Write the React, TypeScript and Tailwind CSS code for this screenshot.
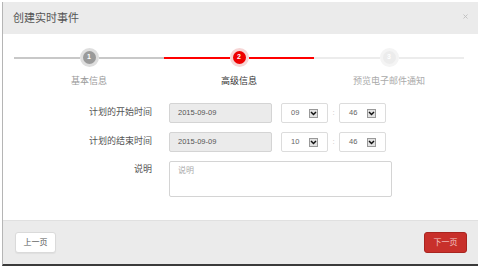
import { X } from "lucide-react";

const cjk = { fontFamily: '"Liberation Sans", "Noto Sans CJK SC", sans-serif' };

function Step({ n, label, line, circle, ring, text }: { n: number; label: string; line: string; circle: string; ring: string; text: string }) {
  return (
    <div className="flex w-[150px] flex-col items-center">
      <div className="flex w-full items-center">
        <div className={`h-[2px] flex-1 ${line}`} />
        <div className={`flex h-[19px] w-[19px] items-center justify-center rounded-full border-[3px] text-[7px] font-bold text-white ${circle} ${ring}`}>
          {n}
        </div>
        <div className={`h-[2px] flex-1 ${line}`} />
      </div>
      <div className={`mt-[8px] text-[9px] leading-[12px] ${text}`}>{label}</div>
    </div>
  );
}

function TimeSelect({ value }: { value: string }) {
  return (
    <div className="flex h-[20px] w-[47px] items-center justify-between rounded-[2px] border border-[#dcdcdc] bg-white pl-[9px] pr-[9px] text-[7.5px] text-[#666]">
      <span>{value}</span>
      <span className="flex h-[9px] w-[9px] items-center justify-center border border-[#999] bg-[#e2e2e2]">
        <svg width="7" height="5" viewBox="0 0 7 5">
          <path d="M1 1 L3.5 3.5 L6 1" fill="none" stroke="#111" strokeWidth="1.5" />
        </svg>
      </span>
    </div>
  );
}

function TimeRow({ label, date, hour, minute }: { label: string; date: string; hour: string; minute: string }) {
  return (
    <div className="flex h-[20px] items-center">
      <div className="w-[149px] text-right text-[9px] text-[#555]">{label}</div>
      <div className="ml-[17px] flex h-[20px] w-[103px] items-center rounded-[2px] border border-[#d4d4d4] bg-[#ebebeb] pl-[8px] text-[7.5px] text-[#555]">
        {date}
      </div>
      <div className="ml-[9px]">
        <TimeSelect value={hour} />
      </div>
      <div className="w-[11px] text-center text-[8px] text-[#c4c4c4]">:</div>
      <TimeSelect value={minute} />
    </div>
  );
}

export default function App() {
  return (
    <div className="h-[268px] w-[480px] bg-white pt-[2px] pl-[2px] pr-[2px] pb-[2px]" style={cjk}>
      <div className="flex h-full flex-col border-l border-b-2 border-l-[#b5b5b5] border-b-[#3a3a3a]">
        <div className="flex h-[32px] items-center justify-between bg-[#ebebeb] pl-[10px] pr-[9px]">
          <span className="text-[11px] text-[#555]">创建实时事件</span>
          <X size={7} strokeWidth={3} className="mb-[3px] text-[#bdbdbd]" />
        </div>

        <div className="flex-1 bg-white">
          <div className="ml-[11px] flex pt-[14px]">
            <Step n={1} label="基本信息" line="bg-[#c8c8c8]" circle="bg-[#9a9a9a]" ring="border-[#dedede]" text="text-[#999]" />
            <Step n={2} label="高级信息" line="bg-[#ff0000]" circle="bg-[#ee0000]" ring="border-[#f6d6d6]" text="text-[#333]" />
            <Step n={3} label="预览电子邮件通知" line="bg-[#ececec]" circle="bg-[#ececec]" ring="border-[#f4f4f4]" text="text-[#aaa]" />
          </div>

          <div className="mt-[16px] flex flex-col gap-[9px]">
            <TimeRow label="计划的开始时间" date="2015-09-09" hour="09" minute="46" />
            <TimeRow label="计划的结束时间" date="2015-09-09" hour="10" minute="46" />
            <div className="flex items-start">
              <div className="w-[149px] pt-[2px] text-right text-[9px] text-[#555]">说明</div>
              <div className="ml-[17px] h-[36px] w-[223px] rounded-[2px] border border-[#d4d4d4] bg-white pl-[8px] pt-[3px] text-[8px] text-[#aaa]">
                说明
              </div>
            </div>
          </div>
        </div>

        <div className="flex h-[44px] items-center justify-between border-t border-[#e0e0e0] bg-[#ebebeb] pl-[12px] pr-[11px]">
          <button className="h-[21px] w-[41px] rounded-[3px] border border-[#dadada] bg-white text-[8px] text-[#555] shadow-[0_1px_1px_rgba(0,0,0,.05)]">
            上一页
          </button>
          <button className="h-[21px] w-[43px] rounded-[3px] border border-[#a82520] bg-[#c8302b] text-[8px] text-[#f3c8c6]">
            下一页
          </button>
        </div>
      </div>
    </div>
  );
}
